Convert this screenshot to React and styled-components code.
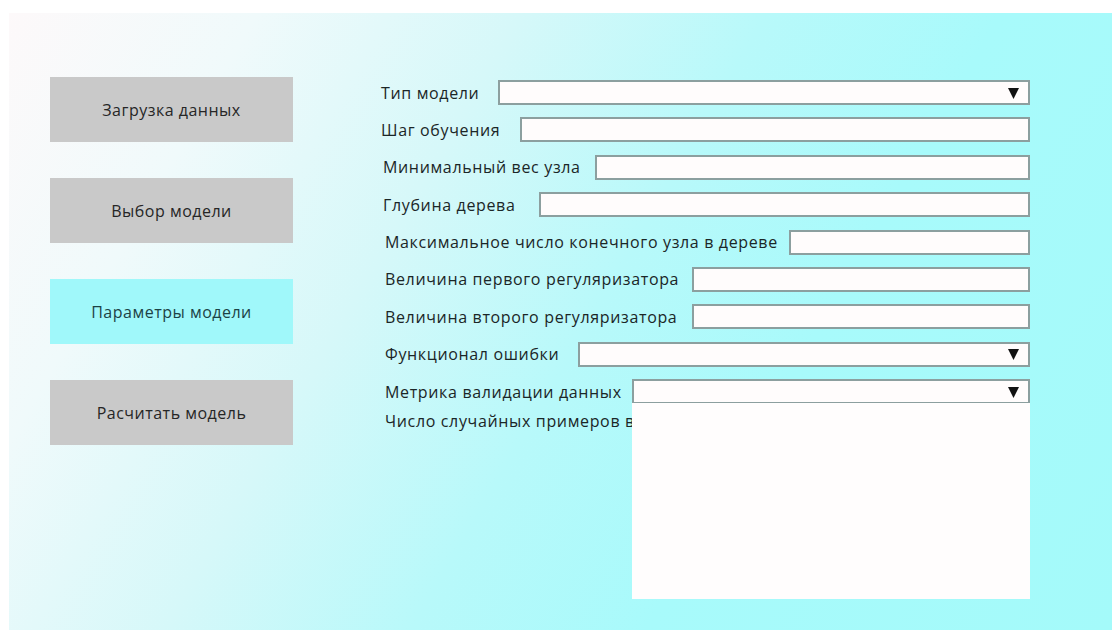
import React from "react";
import styled, { createGlobalStyle } from "styled-components";

const Global = createGlobalStyle`
  html, body { margin: 0; padding: 0; background: #ffffff; }
  body { font-family: "Open Sans", "Noto Sans", sans-serif; }
  * { box-sizing: border-box; }
`;

const Page = styled.div`
  width: 1112px;
  height: 630px;
  padding: 13px 0 0 9px;
  background: #ffffff;
  overflow: hidden;
`;

const Panel = styled.div`
  display: flex;
  height: 100%;
  background: linear-gradient(
    120deg,
    #fdf9fa 0%,
    #f0fafb 17%,
    #d6f8f9 35%,
    #b8f9fa 52%,
    #a8fafb 68%,
    #a4fafa 100%
  );
`;

const Sidebar = styled.nav`
  display: flex;
  flex-direction: column;
  gap: 36px;
  padding: 64px 0 0 41px;
  width: 371px;
  flex: none;
`;

const NavButton = styled.button`
  width: 243px;
  height: 65px;
  border: none;
  padding: 0;
  font-family: inherit;
  font-size: 16px;
  font-weight: 500;
  letter-spacing: 0.5px;
  color: ${(p) => (p.$active ? "#1c4245" : "#262626")};
  background: ${(p) => (p.$active ? "#a0f8fa" : "#c9c9c9")};
  cursor: pointer;
`;

const Form = styled.div`
  position: relative;
  display: flex;
  flex-direction: column;
  gap: 12.4px;
  padding-top: 67px;
  width: 650px;
  flex: none;
`;

const Row = styled.div`
  display: flex;
  align-items: center;
  height: 25px;
  margin-top: ${(p) => (p.$tight ? "-8px" : "0")};
`;

const Label = styled.label`
  flex: none;
  width: ${(p) => p.$w}px;
  padding-left: ${(p) => p.$indent || 1}px;
  font-size: 16px;
  font-weight: 500;
  letter-spacing: 0.65px;
  color: #1b2627;
  white-space: nowrap;
`;

const Field = styled.div`
  position: relative;
  flex: 1;
  height: 100%;
  background: #fffcfc;
  border: 2px solid #8c9f9f;
  display: flex;
  align-items: center;
  justify-content: flex-end;
  padding-right: 9px;
`;

const Menu = styled.div`
  position: absolute;
  left: -2px;
  right: -2px;
  top: calc(100% + 1px);
  height: 196px;
  background: #fffdfd;
  z-index: 2;
`;

const Arrow = () => (
  <svg width="11" height="12" viewBox="0 0 11 12">
    <polygon points="0,1 11,1 5.5,12" fill="#111" />
  </svg>
);

const fields = [
  { label: "Тип модели", w: 118, select: true },
  { label: "Шаг обучения", w: 140 },
  { label: "Минимальный вес узла", w: 215, indent: 3 },
  { label: "Глубина дерева", w: 159, indent: 3 },
  { label: "Максимальное число конечного узла в дереве", w: 409, indent: 5 },
  { label: "Величина первого регуляризатора", w: 312, indent: 5 },
  { label: "Величина второго регуляризатора", w: 312, indent: 5 },
  { label: "Функционал ошибки", w: 198, indent: 5, select: true },
  { label: "Метрика валидации данных", w: 252, indent: 5, select: true, open: true },
];

const menuItems = ["Загрузка данных", "Выбор модели", "Параметры модели", "Расчитать модель"];

export default function App() {
  return (
    <>
      <Global />
      <Page>
        <Panel>
          <Sidebar>
            {menuItems.map((t) => (
              <NavButton key={t} $active={t === "Параметры модели"}>
                {t}
              </NavButton>
            ))}
          </Sidebar>
          <Form>
            {fields.map((f) => (
              <Row key={f.label}>
                <Label $w={f.w} $indent={f.indent}>
                  {f.label}
                </Label>
                <Field>
                  {f.select && <Arrow />}
                  {f.open && <Menu />}
                </Field>
              </Row>
            ))}
            <Row $tight>
              <Label $w={252} $indent={5}>
                Число случайных примеров в
              </Label>
            </Row>
          </Form>
        </Panel>
      </Page>
    </>
  );
}
